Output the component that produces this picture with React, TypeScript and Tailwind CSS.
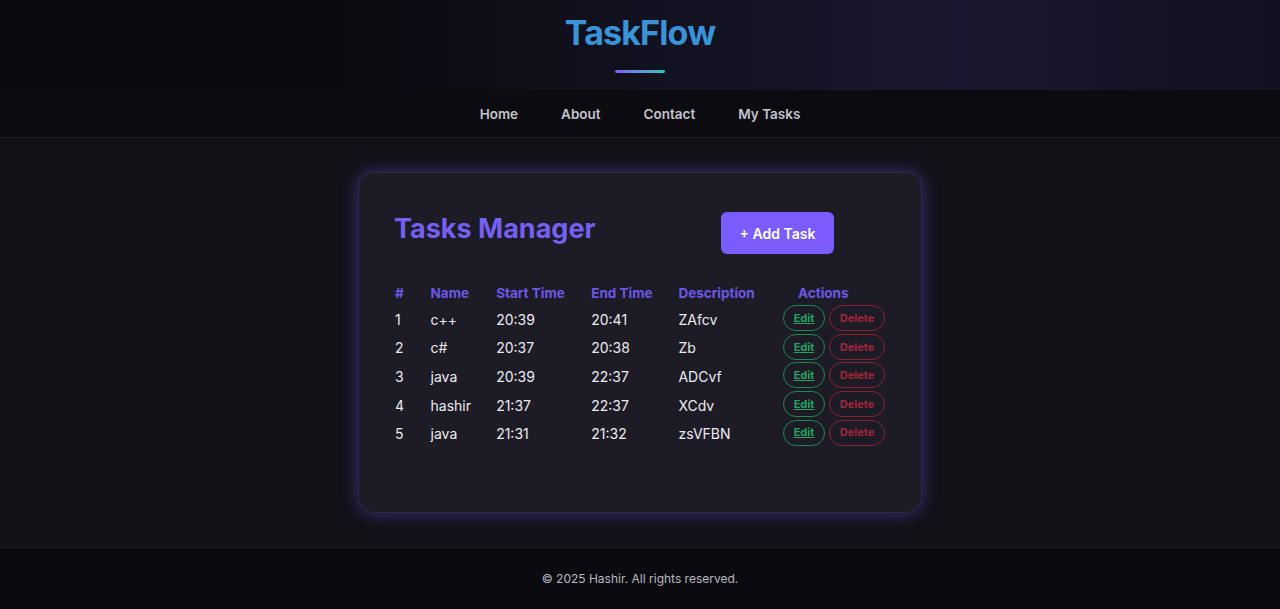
import React from "react";

const tasks = [
  { id: 1, name: "c++", start: "20:39", end: "20:41", desc: "ZAfcv" },
  { id: 2, name: "c#", start: "20:37", end: "20:38", desc: "Zb" },
  { id: 3, name: "java", start: "20:39", end: "22:37", desc: "ADCvf" },
  { id: 4, name: "hashir", start: "21:37", end: "22:37", desc: "XCdv" },
  { id: 5, name: "java", start: "21:31", end: "21:32", desc: "zsVFBN" },
];

export default function App() {
  return (
    <div className="min-h-[609px] flex flex-col bg-[#111117] text-white font-['Inter','Liberation_Sans',sans-serif]">
      {/* Header */}
      <header className="h-[90px] flex flex-col items-center bg-gradient-to-r from-[#0a0a0f] from-25% via-[#1a1830] via-75% to-[#121120]">
        <h1 className="mt-[13px] text-[34px] leading-[40px] font-bold text-[#3a93d6] tracking-tight">TaskFlow</h1>
        <div className="mt-[17px] w-[50px] h-[3px] rounded-full bg-gradient-to-r from-[#7b5cf6] to-[#22c0b8]" />
      </header>

      {/* Nav */}
      <nav className="h-[48px] pt-[2px] flex items-center justify-center gap-[43px] bg-[#0b0b10] border-b border-[#1f1f27] text-[13.5px] font-semibold text-[#c4c4cc]">
        <a>Home</a>
        <a>About</a>
        <a>Contact</a>
        <a>My Tasks</a>
      </nav>

      {/* Main */}
      <main className="flex-1 flex justify-center pt-[34px] pb-[34px]">
        <div className="w-[564px] h-[341px] rounded-2xl bg-[#1c1b26] border border-[#2c2a48] shadow-[0_0_18px_rgba(110,90,240,0.45)] px-9 pt-[39px]">
          <div className="flex items-start justify-between pr-[51px]">
            <h2 className="-mt-[1px] -ml-[1px] text-[27px] leading-[36px] font-bold text-[#7560f2]">Tasks Manager</h2>
            <button className="w-[113px] h-[42px] rounded-md bg-[#7b5cff] text-[14px] font-semibold text-white">
              + Add Task
            </button>
          </div>

          <table className="mt-[28px] w-full text-[14px] text-left">
            <thead>
              <tr className="text-[#6c58e6] text-[13.5px] h-[22px]">
                <th className="w-[36px] font-bold">#</th>
                <th className="w-[66px] font-bold">Name</th>
                <th className="w-[96px] font-bold">Start Time</th>
                <th className="w-[88px] font-bold">End Time</th>
                <th className="w-[104px] font-bold">Description</th>
                <th className="font-bold pl-[16px]">Actions</th>
              </tr>
            </thead>
            <tbody>
              {tasks.map((t) => (
                <tr key={t.id} className="h-[28.6px] text-[#ececf0]">
                  <td className="pt-[2px]">{t.id}</td>
                  <td className="pt-[2px]">{t.name}</td>
                  <td className="pt-[2px]">{t.start}</td>
                  <td className="pt-[2px]">{t.end}</td>
                  <td className="pt-[2px]">{t.desc}</td>
                  <td>
                    <div className="flex gap-[4px] pl-[1px]">
                      <button className="w-[42px] h-[26px] rounded-full border border-[#1e8a52] text-[11px] font-bold text-[#22a55e] underline">
                        Edit
                      </button>
                      <button className="w-[56px] h-[26px] rounded-full border border-[#8a2232] text-[11px] font-bold text-[#a1263a]">
                        Delete
                      </button>
                    </div>
                  </td>
                </tr>
              ))}
            </tbody>
          </table>
        </div>
      </main>

      {/* Footer */}
      <footer className="h-[62px] flex items-center justify-center bg-[#0b0b0f] border-t border-[#17171e] text-[12px] text-[#b8b8c4]">
        © 2025 Hashir. All rights reserved.
      </footer>
    </div>
  );
}
